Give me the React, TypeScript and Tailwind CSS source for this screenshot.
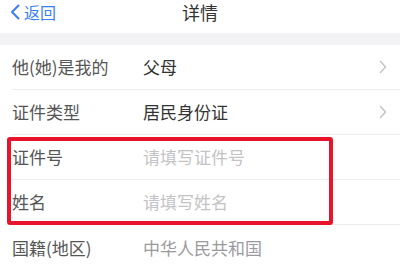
import React from "react";

const font = { fontFamily: '"Noto Sans CJK SC", "Noto Sans", sans-serif' };

function Chevron() {
  return (
    <svg width="8" height="14" viewBox="0 0 8 14" className="shrink-0">
      <polyline points="1.5,1.5 6.5,7 1.5,12.5" fill="none" stroke="#c4c4c8" strokeWidth="1.5" strokeLinecap="round" strokeLinejoin="round" />
    </svg>
  );
}

function Row({ label, value, valueClass, chevron, last }: { label: string; value: string; valueClass: string; chevron?: boolean; last?: boolean }) {
  return (
    <div className="flex h-[45px] pl-[12px]">
      <div className={`flex flex-1 items-center pr-[13px] ${last ? "" : "border-b border-[#ececee]"}`}>
        <div className="w-[131px] shrink-0 text-[17px] text-[#555555]">{label}</div>
        <div className={`flex-1 text-[17px] ${valueClass}`}>{value}</div>
        {chevron && <Chevron />}
      </div>
    </div>
  );
}

export default function App() {
  return (
    <div className="relative w-[400px] h-[266px] overflow-hidden bg-white" style={font}>
      <div className="flex h-[33px] items-center pb-[9px] relative">
        <div className="flex items-center pl-[10px] text-[#3a7ef5] text-[16px]">
          <svg width="10" height="16" viewBox="0 0 10 16" className="mr-[4px]">
            <polyline points="8.5,1.5 2,8 8.5,14.5" fill="none" stroke="#3a7ef5" strokeWidth="2" strokeLinecap="round" strokeLinejoin="round" />
          </svg>
          <span>返回</span>
        </div>
        <div className="absolute left-0 right-0 top-0 h-[24px] flex items-center justify-center text-[18px] text-[#333333]">详情</div>
      </div>
      <div className="h-[12px] bg-[#f3f3f6]" />
      <Row label="他(她)是我的" value="父母" valueClass="text-[#333333]" chevron />
      <Row label="证件类型" value="居民身份证" valueClass="text-[#333333]" chevron />
      <Row label="证件号" value="请填写证件号" valueClass="text-[#c3c3c6]" />
      <Row label="姓名" value="请填写姓名" valueClass="text-[#c3c3c6]" />
      <Row label="国籍(地区)" value="中华人民共和国" valueClass="text-[#9a9a9e]" last />
      <div className="absolute left-[7px] top-[137px] w-[326px] h-[88px] border-[4px] border-[#e8142c] rounded-[3px] pointer-events-none" />
    </div>
  );
}
